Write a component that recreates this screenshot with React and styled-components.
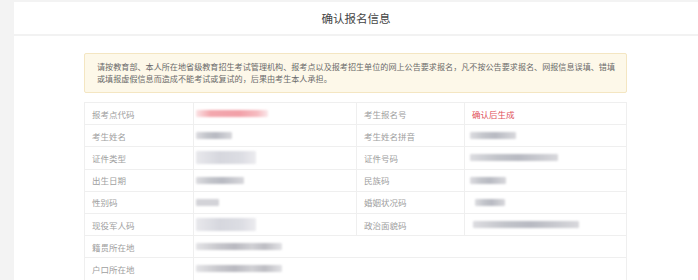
import React from "react";
import styled, { createGlobalStyle } from "styled-components";

const Global = createGlobalStyle`
  html, body { margin: 0; padding: 0; background: #f3f3f3; }
  body { font-family: "Noto Sans CJK SC", "Noto Sans", sans-serif; }
`;

const Page = styled.div`
  display: flex;
  width: 698px;
  height: 280px;
  overflow: hidden;
  background: #f3f3f3;
`;

const Panel = styled.div`
  flex: 1;
  margin-top: 2px;
  margin-left: 14px;
  background: #fff;
  display: flex;
  flex-direction: column;
  & > * { flex-shrink: 0; }
`;

const TitleBar = styled.div`
  height: 32px;
  display: flex;
  align-items: center;
  justify-content: center;
  border-bottom: 2px solid #f2f2f2;
  font-size: 11.5px;
  color: #444;
`;

const Body = styled.div`
  padding: 17px 71px 0 70px;
  display: flex;
  flex-direction: column;
  & > * { flex-shrink: 0; }
`;

const Notice = styled.div`
  background: #fdf8e9;
  border: 1px solid #f4e6c2;
  border-radius: 2px;
  padding: 7px 8px 7px 12px;
  font-size: 8.1px;
  line-height: 12px;
  color: #6a6a6a;
`;

const Grid = styled.div`
  margin-top: 9px;
  display: grid;
  grid-template-columns: 109px 163px 108px 1fr;
  grid-auto-rows: 22.2px;
  border-top: 1px solid #efefef;
  border-left: 1px solid #efefef;
`;

const Cell = styled.div`
  box-sizing: border-box;
  border-right: 1px solid #efefef;
  border-bottom: 1px solid #efefef;
  display: flex;
  align-items: center;
  padding-left: ${(p) => (p.$label ? "7px" : "2px")};
  font-size: 8.5px;
  color: ${(p) => (p.$red ? "#e0525b" : "#a0a0a0")};
  grid-column: ${(p) => (p.$wide ? "span 3" : "auto")};
`;

const Blur = styled.div`
  height: ${(p) => p.$h || 7}px;
  width: ${(p) => p.$w}px;
  margin-left: ${(p) => p.$ml || 0}px;
  background: ${(p) => p.$c || "linear-gradient(90deg, #dcdce0 0%, #c2c4ca 30%, #b8bac2 55%, #d8d8dc 100%)"};
  filter: blur(1.1px);
  border-radius: 1px;
`;

const PINK = "linear-gradient(90deg, #fbe3e5 0%, #f3a8ae 20%, #f2a0a8 60%, #f6bcc1 85%, #fbe8ea 100%)";
const LIGHT = "linear-gradient(90deg, #e8e8ec 0%, #d6d7de 40%, #dcdde3 75%, #ececef 100%)";
const ADDR = "linear-gradient(90deg, #e3e3e6 0%, #c8c8cd 25%, #b9b9c0 45%, #d0d0d4 65%, #bdbdc3 80%, #e2e2e5 100%)";

const rows = [
  ["报考点代码", { w: 72, c: PINK }, "考生报名号", "red"],
  ["考生姓名", { w: 36 }, "考生姓名拼音", { w: 46, ml: 3 }],
  ["证件类型", { w: 60, h: 13, c: LIGHT }, "证件号码", { w: 88, ml: 3 }],
  ["出生日期", { w: 48 }, "民族码", { w: 36, ml: 3 }],
  ["性别码", { w: 23, c: "#d3d3d8" }, "婚姻状况码", { w: 30, ml: 8 }],
  ["现役军人码", { w: 60, h: 13, c: LIGHT }, "政治面貌码", { w: 106, ml: 6 }],
];

export default function App() {
  return (
    <>
      <Global />
      <Page>
        <Panel>
          <TitleBar>确认报名信息</TitleBar>
          <Body>
            <Notice>
              请按教育部、本人所在地省级教育招生考试管理机构、报考点以及报考招生单位的网上公告要求报名，凡不按公告要求报名、网报信息误填、错填
              <br />
              或填报虚假信息而造成不能考试或复试的，后果由考生本人承担。
            </Notice>
            <Grid>
              {rows.map(([l1, v1, l2, v2]) => (
                <React.Fragment key={l1}>
                  <Cell $label>{l1}</Cell>
                  <Cell>
                    <Blur $w={v1.w} $h={v1.h} $c={v1.c} />
                  </Cell>
                  <Cell $label>{l2}</Cell>
                  {v2 === "red" ? (
                    <Cell $label $red>确认后生成</Cell>
                  ) : (
                    <Cell>
                      <Blur $w={v2.w} $ml={v2.ml} $h={v2.h} $c={v2.c} />
                    </Cell>
                  )}
                </React.Fragment>
              ))}
              <Cell $label>籍贯所在地</Cell>
              <Cell $wide>
                <Blur $w={86} $c={ADDR} />
              </Cell>
              <Cell $label>户口所在地</Cell>
              <Cell $wide>
                <Blur $w={86} $c={ADDR} />
              </Cell>
            </Grid>
          </Body>
        </Panel>
      </Page>
    </>
  );
}
